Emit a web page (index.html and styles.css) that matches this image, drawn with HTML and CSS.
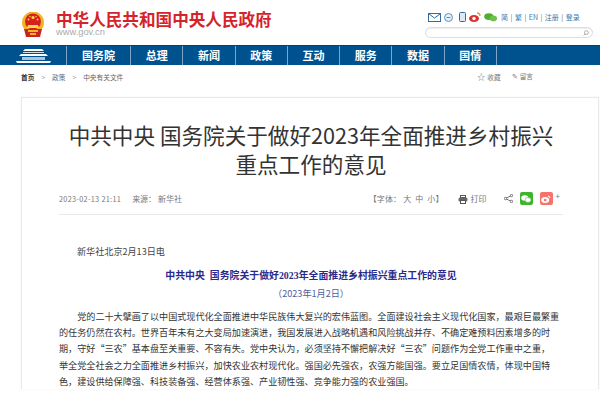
FILE: index.html
```html
<!DOCTYPE html>
<html lang="zh-CN">
<head>
    <meta charset="UTF-8">
    <title>中共中央 国务院关于做好2023年全面推进乡村振兴重点工作的意见</title>
    <link rel="stylesheet" href="styles.css">
</head>
<body>
    <div class="header">
        <div class="brand">
            <svg class="emblem" width="24" height="25" viewBox="0 0 24 25">
                <circle cx="12" cy="10.5" r="11" fill="#f0b429"/>
                <circle cx="12" cy="9.5" r="8" fill="#d5201c"/>
                <circle cx="12" cy="5.5" r="1.6" fill="#ffd84a"/>
                <circle cx="7.5" cy="7.5" r="0.9" fill="#ffd84a"/>
                <circle cx="16.5" cy="7.5" r="0.9" fill="#ffd84a"/>
                <circle cx="9" cy="4.5" r="0.7" fill="#ffd84a"/>
                <circle cx="15" cy="4.5" r="0.7" fill="#ffd84a"/>
                <path d="M7 13h10l1 3H6z" fill="#ffd84a"/>
                <path d="M3 17h18l-2 8H5z" fill="#c9241d"/>
                <path d="M7 18h10v2H7zM9 21h6v2H9z" fill="#f0b429"/>
            </svg>
            <div>
                <div class="brand-name">中华人民共和国中央人民政府</div>
                <div class="brand-url">www.gov.cn</div>
            </div>
        </div>
        <div class="tools">
            <div class="tool-links">
                <svg width="13" height="9" viewBox="0 0 13 9"><rect x="0.5" y="0.5" width="12" height="8" fill="#fff" stroke="#2f6ea5"/><path d="M1 1l5.5 4L12 1" fill="none" stroke="#2f6ea5"/></svg>
                <svg width="9" height="9" viewBox="0 0 9 9"><circle cx="4.5" cy="4.5" r="4" fill="#e4eef6" stroke="#5d93bd"/><path d="M2.5 4.5h4" stroke="#5d93bd"/></svg>
                <svg class="phone" width="7" height="10" viewBox="0 0 7 10"><rect x="0.5" y="0.5" width="6" height="9" rx="1" fill="#dce9f3" stroke="#2f6ea5"/></svg>
                <svg width="12" height="10" viewBox="0 0 12 10"><ellipse cx="5" cy="6.5" rx="5" ry="3.5" fill="#d8322e"/><circle cx="5" cy="6.5" r="1.7" fill="#fff"/><path d="M8 1a3 3 0 0 1 3 3" fill="none" stroke="#f09a2a" stroke-width="1.3"/></svg>
                <svg width="13" height="9" viewBox="0 0 13 9"><ellipse cx="4.8" cy="3.6" rx="4.6" ry="3.4" fill="#4fae32"/><ellipse cx="9.4" cy="5.4" rx="3.6" ry="2.8" fill="#6cc24a"/></svg>
                <span class="lang"><a>简</a><i>|</i><a>繁</a><i>|</i><a>EN</a><i>|</i><a>注册</a><i>|</i><a>登录</a></span>
            </div>
            <div class="search">
                <svg width="6" height="6" viewBox="0 0 6 6"><circle cx="3.4" cy="2.6" r="1.9" fill="none" stroke="#999" stroke-width="0.8"/><path d="M2 4L0.6 5.4" stroke="#999" stroke-width="0.8"/></svg>
            </div>
        </div>
    </div>

    <div class="nav">
        <a class="nav-logo">
            <svg width="35" height="17" viewBox="0 0 35 17">
                <path d="M9 2h17l2 2H7z" fill="#fff"/>
                <path d="M7 5h21v1H7z" fill="#cfe0ee"/>
                <path d="M5 7h25l2 2H3z" fill="#fff"/>
                <path d="M6 10h23v3H6z" fill="#a9c6de"/>
                <path d="M0 14h35l-1 2H1z" fill="#fff"/>
            </svg>
        </a>
        <a class="wide">国务院</a>
        <a>总理</a>
        <a>新闻</a>
        <a>政策</a>
        <a>互动</a>
        <a>服务</a>
        <a>数据</a>
        <a>国情</a>
    </div>

    <div class="crumbs">
        <div class="crumb-path">
            <b>首页</b><span class="sep">&gt;</span><span>政策</span><span class="sep">&gt;</span><span>中央有关文件</span>
        </div>
        <div class="crumb-actions">
            <span><i class="act-icon">☆</i>收藏</span>
            <span><i class="act-icon small">✎</i>留言</span>
        </div>
    </div>

    <div class="article">
        <h1 class="title">中共中央 国务院关于做好2023年全面推进乡村振兴重点工作的意见</h1>

        <div class="meta">
            <div class="meta-left">
                <span class="date">2023-02-13 21:11</span>
                <span>来源：&nbsp;新华社</span>
            </div>
            <div class="meta-right">
                <span class="font-size">【字体：&nbsp;大&nbsp;&nbsp;中&nbsp;&nbsp;小】</span>
                <span class="print">
                    <svg width="10" height="9" viewBox="0 0 10 9"><rect x="2.5" y="0.5" width="5" height="2" fill="none" stroke="#555"/><rect x="0.5" y="2.5" width="9" height="4" rx="1.5" fill="#666"/><rect x="2.5" y="5.5" width="5" height="3" fill="#fff" stroke="#555"/></svg>
                    打印
                </span>
                <svg class="share" width="9" height="9" viewBox="0 0 9 9"><path d="M7.5 1.5L1.5 4.5l6 3" fill="none" stroke="#555" stroke-width="0.8"/><circle cx="7.5" cy="1.5" r="1.2" fill="#fff" stroke="#555" stroke-width="0.8"/><circle cx="1.5" cy="4.5" r="1.2" fill="#fff" stroke="#555" stroke-width="0.8"/><circle cx="7.5" cy="7.5" r="1.2" fill="#fff" stroke="#555" stroke-width="0.8"/></svg>
                <span class="badge badge-wx">
                    <svg width="10" height="8" viewBox="0 0 10 8"><ellipse cx="3.8" cy="3" rx="3.6" ry="2.8" fill="#fff"/><ellipse cx="7" cy="5" rx="3" ry="2.4" fill="#fff" stroke="#3fb52f" stroke-width="0.5"/></svg>
                </span>
                <span class="badge badge-wb">
                    <svg width="10" height="8" viewBox="0 0 10 8"><ellipse cx="4.2" cy="5" rx="4" ry="2.9" fill="#fff"/><circle cx="4.2" cy="5" r="1.3" fill="#f5736a"/><path d="M7 1a2 2 0 0 1 2 2" fill="none" stroke="#fff"/></svg>
                </span>
                <span class="plus">+</span>
            </div>
        </div>

        <div class="content">
            <p class="lead">新华社北京2月13日电</p>
            <p class="doc-title">中共中央&nbsp; 国务院关于做好2023年全面推进乡村振兴重点工作的意见</p>
            <p class="doc-date">（2023年1月2日）</p>
            <p class="para">党的二十大擘画了以中国式现代化全面推进中华民族伟大复兴的宏伟蓝图。全面建设社会主义现代化国家，最艰巨最繁重的任务仍然在农村。世界百年未有之大变局加速演进，我国发展进入战略机遇和风险挑战并存、不确定难预料因素增多的时期，守好“三农”基本盘至关重要、不容有失。党中央认为，必须坚持不懈把解决好“三农”问题作为全党工作重中之重，<br>举全党全社会之力全面推进乡村振兴，加快农业农村现代化。强国必先强农，农强方能国强。要立足国情农情，体现中国特色，建设供给保障强、科技装备强、经营体系强、产业韧性强、竞争能力强的农业强国。</p>
        </div>
    </div>
</body>
</html>
```

FILE: styles.css
```css
body {
    margin: 0;
    background-color: white;
    font-family: "Noto Sans CJK SC", "Liberation Sans", sans-serif;
    color: #333;
    overflow: hidden;
    height: 400px;
    text-spacing-trim: space-all;
}

/* Header */
.header {
    height: 45px;
    padding: 0 7px 0 21px;
    display: flex;
    justify-content: space-between;
}

.brand {
    display: flex;
    gap: 11px;
    padding-top: 10px;
}

.emblem {
    margin-top: 2px;
}

.brand-name {
    font-size: 16.6px;
    line-height: 18px;
    font-weight: 700;
    color: #d5232b;
}

.brand-url {
    font-family: "Liberation Sans", sans-serif;
    font-size: 9.3px;
    line-height: 11px;
    color: #aaa;
    margin-top: -1px;
}

.tools {
    padding-top: 11px;
    width: 168px;
}

.tool-links {
    display: flex;
    align-items: center;
    gap: 3px;
    height: 12px;
    padding-left: 3px;
}

.phone {
    margin-left: 3px;
}

.lang {
    font-size: 7px;
    color: #3d77a8;
    margin-left: 1px;
    white-space: nowrap;
}

.lang i {
    font-style: normal;
    margin: 0 2.5px;
    color: #667;
}

.search {
    margin-top: 4px;
    height: 9px;
    border: 1px solid #ddd;
    border-radius: 6px;
    box-shadow: inset 0 1px 1px #eee;
    display: flex;
    justify-content: flex-end;
    align-items: center;
    padding-right: 3px;
}

/* Nav */
.nav {
    display: flex;
    height: 19px;
    background-color: #00528f;
    border-top: 1px solid #0a3f6e;
    padding-right: 103px;
}

.nav a {
    flex: 1;
    border-right: 1px solid #7fa6c8;
    color: white;
    font-size: 11px;
    font-weight: 700;
    line-height: 19px;
    text-align: center;
}

.nav .nav-logo {
    flex: 0 0 66px;
    display: flex;
    justify-content: center;
    align-items: center;
}

.nav .wide {
    flex: 0 0 63px;
}

/* Breadcrumbs */
.crumbs {
    height: 23px;
    padding: 0 67px 9px 21px;
    display: flex;
    justify-content: space-between;
    align-items: center;
    font-size: 6.7px;
    color: #666;
}

.crumb-path b {
    color: #333;
}

.sep {
    margin: 0 7px;
    color: #999;
}

.crumb-actions {
    display: flex;
    gap: 11px;
    color: #777;
}

.act-icon {
    display: inline-block;
    width: 7px;
    margin-right: 3px;
    font-size: 8px;
    font-style: normal;
}

.act-icon.small {
    width: 5px;
    font-size: 7px;
}

/* Article */
.article {
    margin: 0 1px 0 21px;
    border: 1px solid #e9e9e9;
    border-bottom: none;
    padding: 22px 35px 0 37px;
    box-shadow: 0 0 2px #f2f2f2;
}

.title {
    margin: 0;
    font-size: 21.6px;
    line-height: 29px;
    font-weight: 400;
    color: #333;
    text-align: center;
}

.meta {
    margin-top: 14px;
    height: 22px;
    border-bottom: 1px solid #e8e8e8;
    display: flex;
    justify-content: space-between;
    font-size: 8px;
    line-height: 14px;
    color: #777;
}

.meta-left {
    display: flex;
    gap: 11px;
}

.date {
    font-size: 7.3px;
    letter-spacing: 0.3px;
}

.meta-right {
    display: flex;
    align-items: flex-start;
    gap: 14px;
    padding-right: 3px;
}

.font-size {
    letter-spacing: 0.15px;
}

.print {
    display: flex;
    align-items: center;
    gap: 3px;
}

.share {
    margin-top: 2px;
    margin-left: 3px;
}

.badge {
    width: 13px;
    height: 13px;
    border-radius: 2px;
    display: flex;
    align-items: center;
    justify-content: center;
    margin-left: -7px;
}

.badge-wx {
    background-color: #3fb52f;
}

.badge-wb {
    background-color: #f5736a;
}

.plus {
    margin-left: -11px;
    font-size: 8px;
    line-height: 8px;
}

.content {
    font-size: 9.1px;
    line-height: 16.3px;
    color: #333;
}

.content p {
    margin: 0;
}

.lead {
    padding: 28px 0 0 18px;
    color: #444;
}

.doc-title {
    padding-top: 9px;
    font-family: "Liberation Serif", "Noto Sans CJK SC", serif;
    font-size: 9.9px;
    font-weight: 700;
    color: #2a2a8c;
    text-align: center;
}

.doc-date {
    color: #50609a;
    text-align: center;
}

.para {
    padding-top: 7px;
    text-indent: 18.2px;
}
```
